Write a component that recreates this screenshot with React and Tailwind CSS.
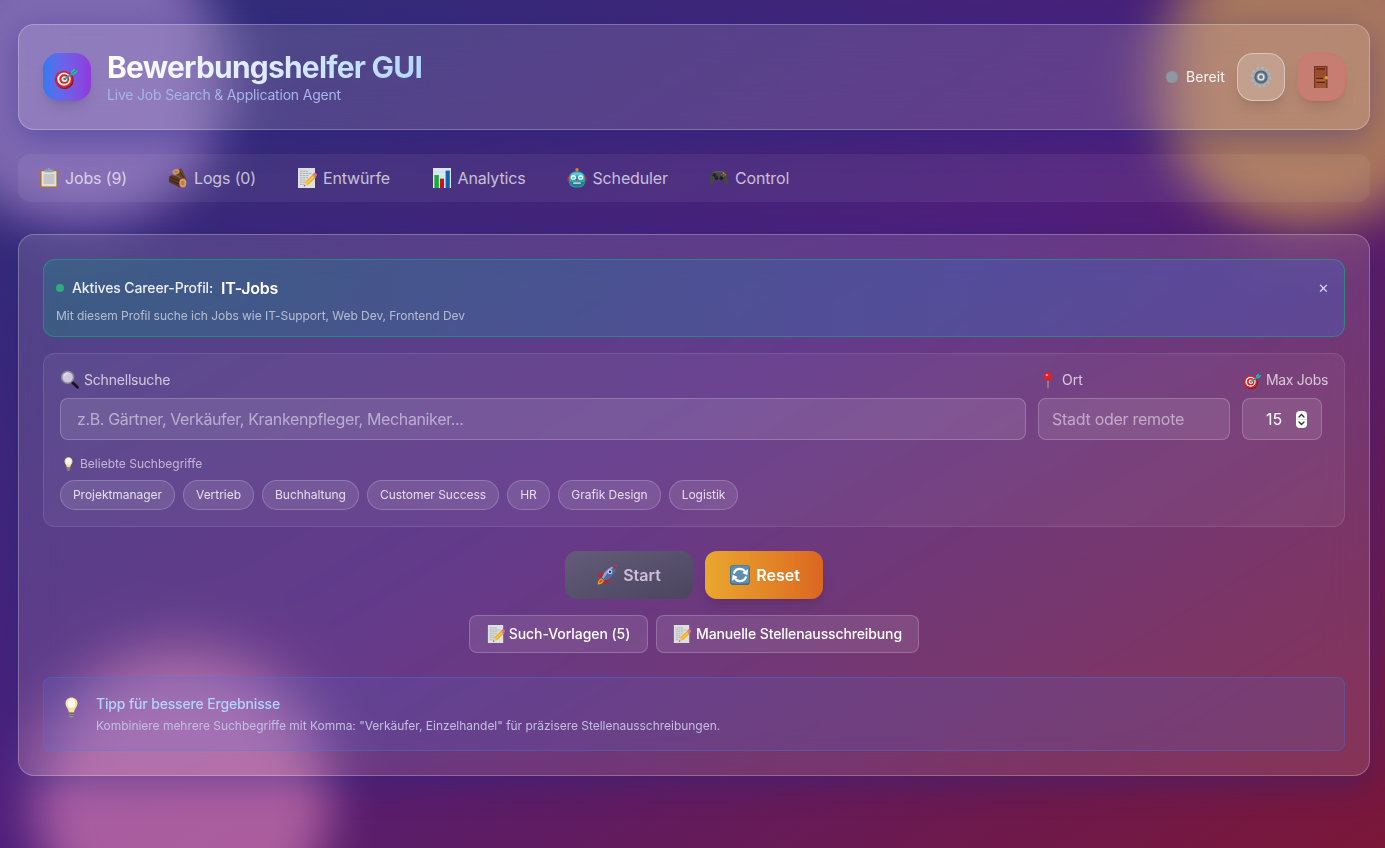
function Target({ className }) {
  return (
    <svg viewBox="0 0 24 24" className={className}>
      <ellipse cx="10.2" cy="14.6" rx="8.6" ry="8.4" fill="#8e1219" />
      <ellipse cx="9.4" cy="13.8" rx="8.6" ry="8.4" fill="#d3222b" />
      <ellipse cx="9.6" cy="13.5" rx="6.5" ry="6.3" fill="#f3eeee" />
      <ellipse cx="9.8" cy="13.5" rx="4.7" ry="4.6" fill="#cf2029" />
      <ellipse cx="10" cy="13.5" rx="2.9" ry="2.8" fill="#f3eeee" />
      <circle cx="10.2" cy="13.5" r="1.2" fill="#c21c26" />
      <path d="M10.4 13.4 18.5 7.4" stroke="#2b9f9f" strokeWidth="1.7" strokeLinecap="round" />
      <path d="m16.4 6 3.4-2.8.8 1.800 2.800.6-3.400 3.200-3.400.8Z" fill="#36b4b0" />
      <path d="m17 8.200 4.400-3.200" stroke="#176f77" strokeWidth=".8" />
    </svg>
  );
}
function Clipboard({ className }) {
  return (
    <svg viewBox="0 0 20 20" className={className}>
      <rect x="1" y="2" width="18" height="18" rx="1.2" fill="#a9713f" />
      <rect x="2.6" y="3.2" width="14.8" height="15.2" fill="#e0e0e0" />
      <rect x="4.500" y="6" width="11" height="10" fill="#cbcbcd" />
      <path d="M5 7h10M5 9h10M5 11h10M5 13h10M5 15h10" stroke="#bfbfc2" strokeWidth=".8" />
      <path d="M5.5 1.6h3a1.5 1.5 0 0 1 3 0h3v2.6h-9Z" fill="#97a3ad" />
    </svg>
  );
}
function Wood({ className }) {
  return (
    <svg viewBox="0 0 20 20" className={className}>
      <path d="m9 1.6 4.5-1.2 5 11-5 2-6-8Z" fill="#69432c" />
      <path d="M1 8.500 4 7l13 3.800-2 8.200-3 .6L1 14.200Z" fill="#5b3824" />
      <path d="m2 9.5 10 3.500M1.600 12l9.600 4.200M12 4l4 6" stroke="#3d2417" strokeWidth=".9" />
      <path d="M8 7.500 13 10" stroke="#8b603f" strokeWidth="1" />
      <ellipse cx="8" cy="3.8" rx="3.6" ry="2.7" transform="rotate(-20 8 3.8)" fill="#d39a64" />
      <ellipse cx="8" cy="3.8" rx="1.7" ry="1.2" fill="#b87943" />
      <ellipse cx="14.8" cy="15" rx="3.5" ry="4.5" fill="#d69a66" />
      <ellipse cx="14.8" cy="15" rx="1.7" ry="2.3" fill="#bd7c49" />
    </svg>
  );
}
function Memo({ className }) {
  return (
    <svg viewBox="0 0 20 20" className={className}>
      <rect x="1" y="0" width="17" height="20" fill="#dfe0e1" />
      <path d="M3 3.2h8M3 5.4h12M3 7.6h9M3 9.8h8M3 12h6M3 14.2h5M3 16.4h4" stroke="#a5a8ab" strokeWidth=".9" strokeDasharray="2.4 .5" />
      <path d="m6.8 18.6 1.2-4.6 3 3Z" fill="#e9c79b" />
      <path d="m8 14 7.8-7.6 3 3-7.8 7.6Z" fill="#f2a91e" />
      <path d="m9.4 15.5 8-7.7" stroke="#ffd15a" strokeWidth="1.2" />
      <path d="m15 7.1 1-1 3 3-1 1Z" fill="#9aa3a8" />
      <path d="m16 6 1-1c1.3-1 3.8 1.4 2.8 2.8l-1 1.2Z" fill="#ec6b80" />
      <path d="m6.8 18.6.4-1.6 1.1 1.1Z" fill="#333" />
    </svg>
  );
}
function Bars({ className }) {
  return (
    <svg viewBox="0 0 20 20" className={className}>
      <rect x="1" y="0" width="18" height="20" fill="#dcebf3" />
      <path d="M1 4h18M1 8h18M1 12h18M1 16h18" stroke="#c4dcea" strokeWidth=".6" />
      <rect x="2.4" y="7" width="4.4" height="13" fill="#0faf32" />
      <rect x="8" y="10.6" width="4" height="9.4" fill="#d01022" />
      <rect x="13.6" y="2.6" width="4.2" height="17.4" fill="#1560b0" />
    </svg>
  );
}
function Robot({ className }) {
  return (
    <svg viewBox="0 0 20 20" className={className}>
      <path d="M10 2v3" stroke="#317f8d" strokeWidth="1.6" />
      <circle cx="10" cy="1.7" r="1.7" fill="#ec7d22" />
      <rect x=".5" y="8.5" width="2.6" height="5" rx="1" fill="#bf3131" />
      <rect x="16.9" y="8.5" width="2.6" height="5" rx="1" fill="#bf3131" />
      <path d="M2.2 9.5C2.2 5.5 5 3.6 10 3.6s7.8 1.9 7.8 5.9V14c0 3.5-2.5 5.6-7.8 5.6S2.2 17.5 2.2 14Z" fill="#2fa3b0" />
      <path d="M4 7.3C5 5 8 4.6 10 4.6s5 .4 6 2.7Z" fill="#65c9d1" />
      <path d="M3 14c.5 3.5 3 4.8 7 4.8s6.5-1.3 7-4.8Z" fill="#1c8090" />
      <ellipse cx="6.3" cy="9.4" rx="2.7" ry="2.300" fill="#e6fbff" />
      <ellipse cx="13.7" cy="9.4" rx="2.7" ry="2.300" fill="#e6fbff" />
      <ellipse cx="6.3" cy="9.700" rx="1.500" ry="1" fill="#4bc6e0" />
      <ellipse cx="13.7" cy="9.700" rx="1.500" ry="1" fill="#4bc6e0" />
      <path d="m10 10.3 1.3 2.3H8.7Z" fill="#d9392b" />
      <rect x="6" y="14.300" width="8" height="1.700" rx=".8" fill="#b9cfc9" />
    </svg>
  );
}
function Gamepad({ className }) {
  return (
    <svg viewBox="0 0 22 18" className={className}>
      <path d="M5 1.500c1-.9 3-.9 4 0h4c1-.9 3-.9 4 0 2.600.7 4.200 7.500 4.500 11.700.3 3.800-2.900 4-4.200 1.300L15.500 11h-9l-1.800 3.500C3.400 17.200.2 17 .5 13.200.8 9 2.400 2.200 5 1.500Z" fill="#454647" />
      <path d="M5 2.800c4-1 8-1 12 0" stroke="#6c6e70" strokeWidth=".8" fill="none" />
      <path d="M3.800 5.800h4.400M6 3.600V8" stroke="#191a1a" strokeWidth="1.500" />
      <circle cx="8.300" cy="9.200" r="2" fill="#1f2022" />
      <circle cx="13.700" cy="9.200" r="2" fill="#1f2022" />
      <circle cx="16" cy="3.700" r="1" fill="#d9822a" />
      <circle cx="17.900" cy="5.400" r="1.200" fill="#e2492a" />
      <circle cx="14.200" cy="5.400" r=".8" fill="#5a6f8a" />
      <circle cx="16" cy="7.100" r=".8" fill="#5c7d5b" />
    </svg>
  );
}
function Gear({ className }) {
  return (
    <svg viewBox="0 0 24 24" className={className}>
      <circle cx="12" cy="12" r="9.700" fill="none" stroke="#a9bac5" strokeWidth="3" strokeDasharray="2.400 2.679" />
      <circle cx="12" cy="12" r="8" fill="none" stroke="#9aadb9" strokeWidth="2" />
      <circle cx="12" cy="12" r="7.200" fill="#566773" />
      <circle cx="12" cy="12" r="5" fill="#82939e" />
      <circle cx="12" cy="12" r="3" fill="none" stroke="#d6e2ea" strokeWidth="1.800" />
      <circle cx="12" cy="12" r="1.800" fill="#7d706d" />
    </svg>
  );
}
function Door({ className }) {
  return (
    <svg viewBox="0 0 14 22" className={className}>
      <rect x="0" y="0" width="13.500" height="22" fill="#6f3422" />
      <rect x="1.200" y="1" width="11" height="21" fill="#a3532f" />
      <rect x="2.400" y="3" width="8.600" height="7" fill="#994b2b" />
      <path d="M2.400 2.800H11M2.400 12.300H9M2.400 16.400H11" stroke="#54230f" strokeWidth="1.200" />
      <rect x="2.400" y="13.500" width="8.600" height="1.600" fill="#b5613a" />
      <circle cx="12.300" cy="11.800" r="1.700" fill="#dba032" />
    </svg>
  );
}
function Lens({ className }) {
  return (
    <svg viewBox="0 0 20 20" className={className}>
      <path d="m12 12 5.500 5.200" stroke="#16171a" strokeWidth="2.700" strokeLinecap="round" />
      <circle cx="7.600" cy="7.200" r="6" fill="#cfc9e0" stroke="#858891" strokeWidth="1.500" />
      <path d="M4 6.200C5 4.300 6.500 3.400 8.300 3.400" stroke="#e5e1ee" strokeWidth="1.300" fill="none" />
    </svg>
  );
}
function Pin({ className }) {
  return (
    <svg viewBox="0 0 10 18" className={className}>
      <path d="M3.900 8h2.200l-.4 9.500H4.300Z" fill="#8f8791" />
      <circle cx="5" cy="4.800" r="4.600" fill="#d6242a" />
      <ellipse cx="3.800" cy="3.200" rx="1.500" ry="1.200" fill="#f58b86" />
    </svg>
  );
}
function Bulb({ className }) {
  return (
    <svg viewBox="0 0 13 21" className={className}>
      <path d="M6.5.4c3.6 0 6 2.6 6 5.900 0 3.800-3 5.300-3.400 8.900H3.900C3.500 11.600.5 10.100.5 6.300c0-3.300 2.400-5.900 6-5.900Z" fill="#f6dfa0" />
      <ellipse cx="6.5" cy="6.3" rx="4" ry="4.8" fill="#fffbea" />
      <path d="M4 15h5v3.500L7.800 20.600H5.200L4 18.500Z" fill="#9b9689" />
      <path d="M4 16.600h5M4.300 18.400h4.400" stroke="#5f5c58" strokeWidth=".8" />
    </svg>
  );
}
function Rocket({ className }) {
  return (
    <svg viewBox="0 0 20 20" className={className}>
      <path d="M.6 19.500c.1-3 1.400-5.600 4-6.200l2.200 2.400c-.4 2.400-3.200 3.600-6.200 3.800Z" fill="#f1a423" />
      <path d="M1.800 18c.3-2 1-3.200 2.600-3.600l1.200 1.300c-.3 1.400-1.900 2.100-3.800 2.300Z" fill="#e04a2a" />
      <path d="m7 8-4.400.8L.4 12l5 .8ZM12 13.200l-.6 4L8.300 19.700l-1-5Z" fill="#c8202c" />
      <path d="M5 12.600C7 6.600 12.500 1.500 19.400.5c-.7 6.800-5.400 12.500-11.800 14.800Z" fill="#8fa8d2" />
      <path d="M6.400 14C9 9.500 13 4.500 19.400.5c-.7 6.800-5.400 12.500-11.800 14.800Z" fill="#456bb0" />
      <path d="M15.200 1.700c1.400-.7 2.800-1.100 4.200-1.200-.1 1.400-.4 2.800-1 4.200Z" fill="#c8202c" />
      <circle cx="13" cy="6.800" r="2.200" fill="#dde5f1" />
      <circle cx="13" cy="6.800" r="1.300" fill="#28314c" />
    </svg>
  );
}
function Refresh({ className }) {
  return (
    <svg viewBox="0 0 20 20" className={className}>
      <rect x="0" y="0" width="20" height="20" rx="3.600" fill="#416f92" />
      <rect x=".8" y=".6" width="18.400" height="18" rx="3" fill="#5f8fb0" />
      <path d="M3.800 8.500C4.800 5.200 7.300 3.900 10 3.900c2.200 0 3.800.8 5 2.300M16.200 11.500c-1 3.300-3.500 4.600-6.200 4.600-2.200 0-3.800-.8-5-2.300" stroke="#fff" strokeWidth="2.200" fill="none" />
      <path d="m18 4.200-.6 6-5.200-2.200ZM2 15.800l.6-6L7.800 12Z" fill="#fff" />
    </svg>
  );
}

const tabs = [
  { label: "Jobs (9)", Icon: Clipboard, w: "w-[62.500px]" },
  { label: "Logs (0)", Icon: Wood, w: "w-[62.500px]" },
  { label: "Entwürfe", Icon: Memo, w: "w-[68px]" },
  { label: "Analytics", Icon: Bars, w: "w-[68.500px]" },
  { label: "Scheduler", Icon: Robot, w: "w-[76px]" },
  { label: "Control", Icon: Gamepad, w: "w-[56px]" },
];
const terms = [
  ["Projektmanager", "w-[115px]"],
  ["Vertrieb", "w-[71px]"],
  ["Buchhaltung", "w-[97px]"],
  ["Customer Success", "w-[132px]"],
  ["HR", "w-[43px]"],
  ["Grafik Design", "w-[103px]"],
  ["Logistik", "w-[69px]"],
];
const field = "flex h-[42px] items-center rounded-lg border border-white/20 bg-white/10";

export default function App() {
  return (
    <div className="relative h-[848px] w-full overflow-hidden bg-[linear-gradient(to_bottom_right,#2b2f77_0%,#4f1f7b_50%,#7b1738_100%)] font-['Inter','Liberation_Sans',sans-serif] text-white">
      <div className="absolute -left-[68px] -top-[68px] size-[296px] rounded-full bg-[#a283cc] opacity-70 blur-xl" />
      <div className="absolute -right-[68px] -top-[68px] size-[296px] rounded-full bg-[#d09d53] opacity-70 blur-xl" />
      <div className="absolute left-[34px] top-[650px] size-[296px] rounded-full bg-[#ce78b2] opacity-70 blur-xl" />

      <div className="relative pl-[18px] pr-[15px] pt-6">
        <header className="flex h-[106px] items-center justify-between rounded-2xl border border-white/25 bg-white/[0.13] px-6 shadow-[0_8px_32px_rgba(31,38,135,0.37)] backdrop-blur-[20px]">
          <div className="flex items-center gap-4">
            <div className="flex size-12 items-center justify-center rounded-2xl bg-linear-to-r from-[#2f7bf0] to-[#9138dd] shadow-lg">
              <Target className="mr-0.5 mt-px size-[25px]" />
            </div>
            <div>
              <h1 className="w-[330px] whitespace-nowrap bg-[linear-gradient(to_right,#fff,#dbeafe_50%,#b4d8fe_95%)] bg-clip-text text-[30px] font-bold leading-9 tracking-[-0.8px] text-transparent">Bewerbungshelfer GUI</h1>
              <p className="text-sm leading-5 tracking-[-0.19px] text-[#a6b6e8]">Live Job Search &amp; Application Agent</p>
            </div>
          </div>
          <div className="flex items-center gap-3">
            <div className="flex items-center gap-2">
              <span className="size-3 rounded-full bg-[#8f97a3]" />
              <span className="text-sm tracking-[0.08px] text-white/90">Bereit</span>
            </div>
            <button className="flex size-12 items-center justify-center rounded-2xl border border-white/40 bg-white/20 shadow-lg"><Gear className="size-[22px]" /></button>
            <button className="flex size-12 items-center justify-center rounded-2xl border border-[#d9726b] bg-[#c57e71] shadow-lg"><Door className="h-[22px] w-[14px]" /></button>
          </div>
        </header>

        <nav className="mt-6 flex h-12 gap-px rounded-xl bg-white/[0.06] pl-0.5">
          {tabs.map(({ label, Icon, w }) => (
            <button key={label} className="flex items-center gap-[5px] pl-5 pr-[20.500px] text-base tracking-[-0.15px] text-white/70">
              <Icon className="-ml-px size-5 shrink-0 [margin-right:1px]" />
              <span className={`${w} whitespace-nowrap text-left`}>{label}</span>
            </button>
          ))}
        </nav>

        <main className="mt-8 h-[542px] rounded-2xl border border-white/25 bg-white/[0.12] p-6 shadow-[0_8px_32px_rgba(31,38,135,0.37)] backdrop-blur-[20px]">
          <section className="flex h-[78px] justify-between rounded-xl border border-[#10b981]/50 bg-[linear-gradient(to_right,rgba(16,150,125,0.30),rgba(59,110,220,0.30))] px-3 pt-4">
            <div>
              <div className="flex h-6 items-center gap-2">
                <span className="size-2 rounded-full bg-[#2fac79]" />
                <span className="w-[141px] whitespace-nowrap text-sm font-medium tracking-[-0.12px] text-white/90">Aktives Career-Profil:</span>
                <span className="font-semibold tracking-[-0.2px]">IT-Jobs</span>
              </div>
              <p className="mt-2 text-xs leading-4 tracking-[-0.04px] text-white/60">Mit diesem Profil suche ich Jobs wie IT-Support, Web Dev, Frontend Dev</p>
            </div>
            <button className="mr-[3px] mt-px h-6 text-[13px] text-white/75">✕</button>
          </section>

          <section className="mt-4 h-[174px] rounded-xl border border-white/10 bg-white/5 p-4">
            <div className="flex gap-3">
              <div className="flex-1">
                <label className="mb-2 flex h-5 items-center gap-1 text-sm tracking-[-0.2px] text-white/70"><Lens className="size-[20px]" />Schnellsuche</label>
                <div className={`${field} px-4 tracking-[-0.365px] text-white/50`}>z.B. Gärtner, Verkäufer, Krankenpfleger, Mechaniker...</div>
              </div>
              <div className="w-48">
                <label className="mb-2 flex h-5 items-center text-sm text-white/70"><Pin className="ml-[5px] mr-[9px] h-[17px] w-[10px]" />Ort</label>
                <div className={`${field} px-[13px] tracking-[-0.275px] text-white/50`}>Stadt oder remote</div>
              </div>
              <div className="w-[86px]">
                <label className="mb-2 flex h-5 items-center gap-1 whitespace-nowrap text-sm tracking-[-0.3px] text-white/70"><Target className="ml-px size-[19px]" />Max Jobs</label>
                <div className={`${field} w-20 justify-between pl-[23px] pr-[14px]`}>
                  15
                  <svg viewBox="0 0 11 17" className="h-[17px] w-[11px]">
                    <rect width="11" height="17" rx="4" fill="#fff" />
                    <path d="M0 8.500h11" stroke="#ddd" strokeWidth=".8" />
                    <path d="m3 6 2.500-2.500L8 6M3 11l2.500 2.500L8 11" stroke="#333" strokeWidth="1.300" fill="none" strokeLinecap="round" />
                  </svg>
                </div>
              </div>
            </div>
            <div className="mt-4 flex h-4 items-center text-xs text-white/60"><Bulb className="ml-1 mr-[7px] h-[14px] w-[9px]" />Beliebte Suchbegriffe</div>
            <div className="mt-2 flex gap-2">
              {terms.map(([t, w]) => (
                <button key={t} className={`${w} h-[30px] whitespace-nowrap rounded-full border border-white/20 bg-white/10 text-xs tracking-[-0.04px] text-white/80`}>{t}</button>
              ))}
            </div>
          </section>

          <div className="mt-6 flex justify-center gap-3">
            <button className="flex h-12 w-32 items-center justify-center gap-[6px] rounded-xl bg-linear-to-br from-[#645c7a] to-[#4b455f] font-semibold text-[#cfc0da]"><Rocket className="size-5" />Start</button>
            <button className="flex h-12 w-[118px] items-center justify-center gap-[6px] rounded-xl bg-linear-to-r from-[#eaa72e] to-[#db6621] pl-0.5 font-semibold shadow-lg"><Refresh className="size-5" />Reset</button>
          </div>
          <div className="mt-4 flex justify-center gap-2">
            <button className="flex h-[38px] w-[179px] items-center justify-center gap-1 rounded-lg border border-white/20 bg-white/10 text-sm font-medium tracking-[-0.06px]"><Memo className="size-[18px]" />Such-Vorlagen (5)</button>
            <button className="flex h-[38px] w-[263px] items-center justify-center gap-[5px] rounded-lg border border-white/20 bg-white/10 text-sm font-medium tracking-[-0.12px]"><Memo className="size-[18px]" />Manuelle Stellenausschreibung</button>
          </div>

          <section className="mt-6 flex h-[74px] rounded-lg border border-[#3b82f6]/30 bg-[#4a74dc]/15 pl-[21px] pt-4">
            <Bulb className="mt-[3px] h-[21px] w-[13px]" />
            <div className="ml-[18px]">
              <p className="text-sm font-medium leading-5 tracking-[-0.16px] text-[#b3d4fd]">Tipp für bessere Ergebnisse</p>
              <p className="mt-1 text-xs leading-4 tracking-[-0.03px] text-[#c4bfe2]">Kombiniere mehrere Suchbegriffe mit Komma: "Verkäufer, Einzelhandel" für präzisere Stellenausschreibungen.</p>
            </div>
          </section>
        </main>
      </div>
    </div>
  );
}
